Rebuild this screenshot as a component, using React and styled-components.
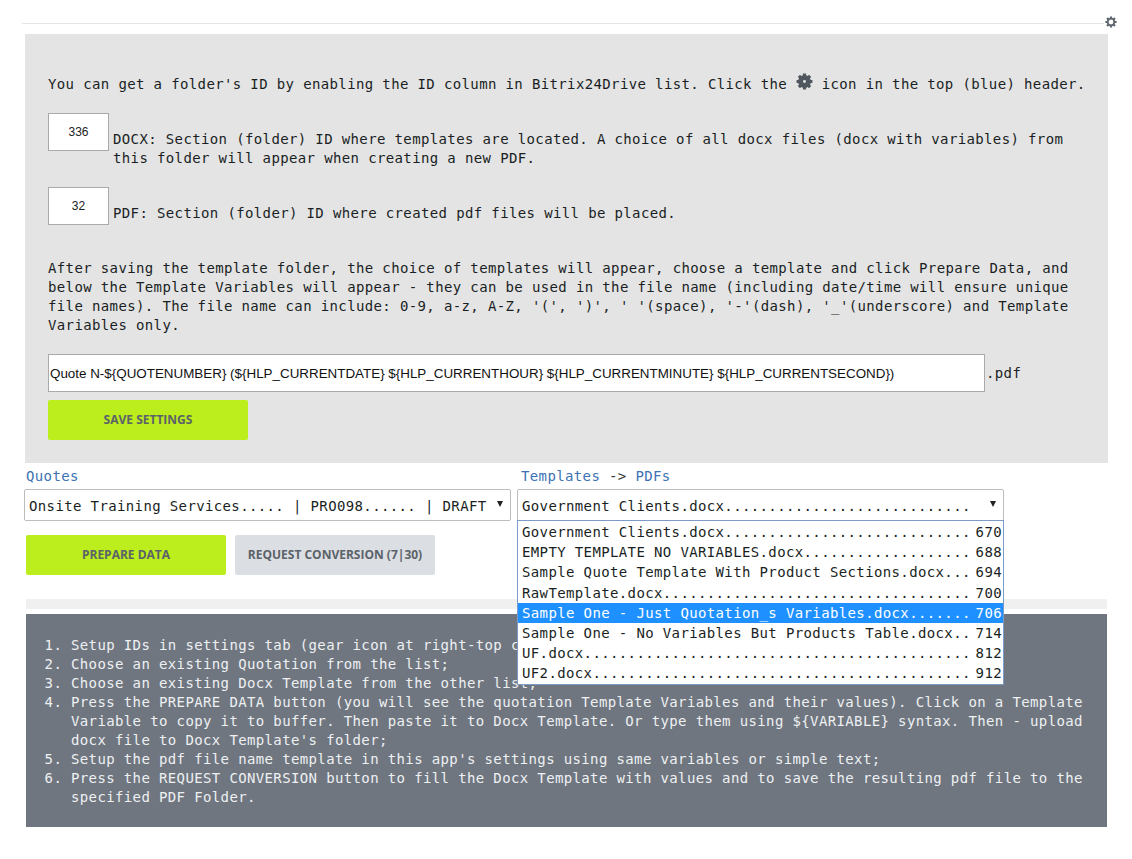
import React from 'react';
import styled, { createGlobalStyle } from 'styled-components';

const Global = createGlobalStyle`
  html, body { margin: 0; padding: 0; background: #fff; }
  body { font-family: "DejaVu Sans Mono", monospace; font-size: 14px; letter-spacing: 0.37px; line-height: 19px; color: #1a1f24; }
  * { box-sizing: border-box; }
`;

const Page = styled.div`
  width: 1132px;
  height: 859px;
  overflow: hidden;
  padding: 16px 0 0 0;
`;
const TopBar = styled.div`
  display: flex;
  align-items: flex-start;
  height: 18px;
  padding-left: 22px;
  width: 1117px;
`;
const TopLine = styled.div`
  flex: 1;
  height: 1px;
  margin-top: 7px;
  background: #e4e4e4;
`;
const GearSvg = styled.svg`
  flex: none;
  display: inline-block;
  color: ${p => p.$color};
`;
const TopGearSvg = styled(GearSvg)`
  width: 12px;
  height: 12px;
  margin-left: 1px;
`;
const InlineGearSvg = styled(GearSvg)`
  width: 17px;
  height: 17px;
  vertical-align: -1px;
  margin: 0 0 0 0;
`;
const teeth = [0, 45, 90, 135];
const Gear = ({ as: Comp, ring, radius, color }) => (
  <Comp viewBox="0 0 24 24" $color={color} aria-hidden="true">
    <circle cx="12" cy="12" r={radius} fill="none" stroke="currentColor" strokeWidth={ring} />
    {teeth.map(a => (
      <line key={a} x1="12" y1="0.8" x2="12" y2="23.2" stroke="currentColor" strokeWidth="4.4" strokeDasharray="5.5 11.4 5.5" transform={`rotate(${a} 12 12)`} />
    ))}
  </Comp>
);
const SettingsPanel = styled.section`
  margin-left: 25px;
  width: 1083px;
  height: 429px;
  background: #e4e4e4;
  padding: 39px 22px 0 23px;
`;
const Intro = styled.p`
  margin: 0;
  height: 19px;
  white-space: nowrap;
`;
const FolderRow = styled.div`
  display: flex;
  gap: 4px;
  margin-top: ${p => p.$top}px;
`;
const FolderInput = styled.input`
  width: 61px;
  height: 38px;
  flex: none;
  background: #fff;
  border: 1px solid #aaa;
  padding: 0;
  text-align: center;
  font: 12px "Liberation Sans", Arial, sans-serif;
  color: #222;
  letter-spacing: 0;
`;
const FolderText = styled.div`
  padding-top: 17px;
`;
const Para = styled.p`
  margin: 34px 0 0;
`;
const NameRow = styled.div`
  display: flex;
  align-items: center;
  gap: 1px;
  margin-top: 19px;
`;
const NameInput = styled.input`
  width: 937px;
  height: 38px;
  background: #fff;
  border: 1px solid #aaa;
  padding: 0 1px;
  font: 13.4px "Liberation Sans", Arial, sans-serif;
  letter-spacing: 0;
  color: #111;
`;
const Btn = styled.button`
  display: block;
  width: 200px;
  height: 40px;
  border: 0;
  border-radius: 2px;
  padding: 0 0 2px;
  background: ${p => (p.$muted ? '#dbdfe3' : '#bbee1c')};
  color: #5c6269;
  font: 700 12px "Open Sans", sans-serif;
  letter-spacing: 0;
  text-transform: uppercase;
`;
const SaveBtn = styled(Btn)`
  margin-top: 8px;
`;
const Pickers = styled.div`
  display: flex;
  gap: 6px;
  margin: 4px 0 0 24px;
`;
const PickerCol = styled.div`
  position: relative;
  width: 487px;
`;
const PickerLabel = styled.div`
  height: 19px;
  color: #3d72b4;
  padding-left: ${p => p.$indent}px;
  margin-bottom: 3px;
  font-size: 14px;
`;
const Arrow = styled.span`
  color: #333;
`;
const SelectBox = styled.div`
  height: 32px;
  display: flex;
  align-items: center;
  justify-content: space-between;
  background: #fff;
  border: 1px solid #bdbdbd;
  border-radius: 2px;
  padding: 2px 5px 0 ${p => p.$pad}px;
  white-space: nowrap;
`;
const Caret = styled.span`
  width: 0;
  height: 0;
  border-left: 3px solid transparent;
  border-right: 3px solid transparent;
  border-top: 6px solid #222;
  margin: -5px 2px 0 0;
`;
const Dropdown = styled.ul`
  position: absolute;
  top: 100%;
  left: 0;
  right: 0;
  z-index: 2;
  margin: -1px 0 0;
  padding: 1.1px 0 1px;
  list-style: none;
  background: #fff;
  border: 1px solid #7d9bc9;
  width: 487px;
`;
const Option = styled.li`
  height: 20.15px;
  line-height: 20px;
  display: flex;
  justify-content: space-between;
  padding: 0 1px 0 4px;
  white-space: nowrap;
  background: ${p => (p.$active ? '#1e90ff' : 'transparent')};
  color: ${p => (p.$active ? '#fff' : '#1a1f24')};
`;
const Actions = styled.div`
  display: flex;
  gap: 9px;
  margin: 14px 0 0 26px;
`;
const Strip = styled.div`
  margin: 24px 0 0 26px;
  width: 1081px;
  height: 10px;
  background: #f0f0f0;
`;
const HelpPanel = styled.section`
  margin: 5px 0 0 26px;
  width: 1081px;
  height: 213px;
  background: #6f7680;
  color: #eef0f2;
  padding: 22px 22px 0 0;
`;
const Steps = styled.ol`
  margin: 0;
  padding: 0 0 0 45px;
`;

const options = [
  ['Government Clients.docx', 670],
  ['EMPTY TEMPLATE NO VARIABLES.docx', 688],
  ['Sample Quote Template With Product Sections.docx', 694],
  ['RawTemplate.docx', 700],
  ['Sample One - Just Quotation_s Variables.docx', 706],
  ['Sample One - No Variables But Products Table.docx', 714],
  ['UF.docx', 812],
  ['UF2.docx', 912],
];

export default function App() {
  return (
    <Page>
      <Global />
      <TopBar>
        <TopLine />
        <Gear as={TopGearSvg} ring={3.6} radius={6.6} color="#5f666e" />
      </TopBar>
      <SettingsPanel>
        <Intro>
          You can get a folder's ID by enabling the ID column in Bitrix24Drive list. Click the <Gear as={InlineGearSvg} ring={7} radius={5.6} color="#50575f" /> icon in the top (blue) header.
        </Intro>
        <FolderRow $top={21}>
          <FolderInput defaultValue="336" />
          <FolderText>
            DOCX: Section (folder) ID where templates are located. A choice of all docx files (docx with variables) from this folder will appear when creating a new PDF.
          </FolderText>
        </FolderRow>
        <FolderRow $top={19}>
          <FolderInput defaultValue="32" />
          <FolderText>PDF: Section (folder) ID where created pdf files will be placed.</FolderText>
        </FolderRow>
        <Para>
          After saving the template folder, the choice of templates will appear, choose a template and click Prepare Data, and below the Template Variables will appear - they can be used in the file name (including date/time will ensure unique file names). The file name can include: 0-9, a-z, A-Z, '(', ')', ' '(space), '-'(dash), '_'(underscore) and Template Variables only.
        </Para>
        <NameRow>
          <NameInput defaultValue="Quote N-${QUOTENUMBER} (${HLP_CURRENTDATE} ${HLP_CURRENTHOUR} ${HLP_CURRENTMINUTE} ${HLP_CURRENTSECOND})" />
          <span>.pdf</span>
        </NameRow>
        <SaveBtn>Save settings</SaveBtn>
      </SettingsPanel>
      <Pickers>
        <PickerCol>
          <PickerLabel $indent={2}>Quotes</PickerLabel>
          <SelectBox $pad={4}>
            <span>Onsite Training Services..... | PRO098...... | DRAFT</span>
            <Caret />
          </SelectBox>
        </PickerCol>
        <PickerCol>
          <PickerLabel $indent={4}>Templates <Arrow>-&gt;</Arrow> PDFs</PickerLabel>
          <SelectBox $pad={4}>
            <span>{'Government Clients.docx'.padEnd(51, '.')}</span>
            <Caret />
          </SelectBox>
          <Dropdown>
            {options.map(([name, id]) => (
              <Option key={id} $active={id === 706}>
                <span>{name.padEnd(51, '.')}</span>
                <span>{id}</span>
              </Option>
            ))}
          </Dropdown>
        </PickerCol>
      </Pickers>
      <Actions>
        <Btn>Prepare data</Btn>
        <Btn $muted>Request conversion (7|30)</Btn>
      </Actions>
      <Strip />
      <HelpPanel>
        <Steps>
          <li>Setup IDs in settings tab (gear icon at right-top corner);</li>
          <li>Choose an existing Quotation from the list;</li>
          <li>Choose an existing Docx Template from the other list;</li>
          <li>{"Press the PREPARE DATA button (you will see the quotation Template Variables and their values). Click on a Template Variable to copy it to buffer. Then paste it to Docx Template. Or type them using ${VARIABLE} syntax. Then - upload docx file to Docx Template's folder;"}</li>
          <li>Setup the pdf file name template in this app's settings using same variables or simple text;</li>
          <li>Press the REQUEST CONVERSION button to fill the Docx Template with values and to save the resulting pdf file to the specified PDF Folder.</li>
        </Steps>
      </HelpPanel>
    </Page>
  );
}
